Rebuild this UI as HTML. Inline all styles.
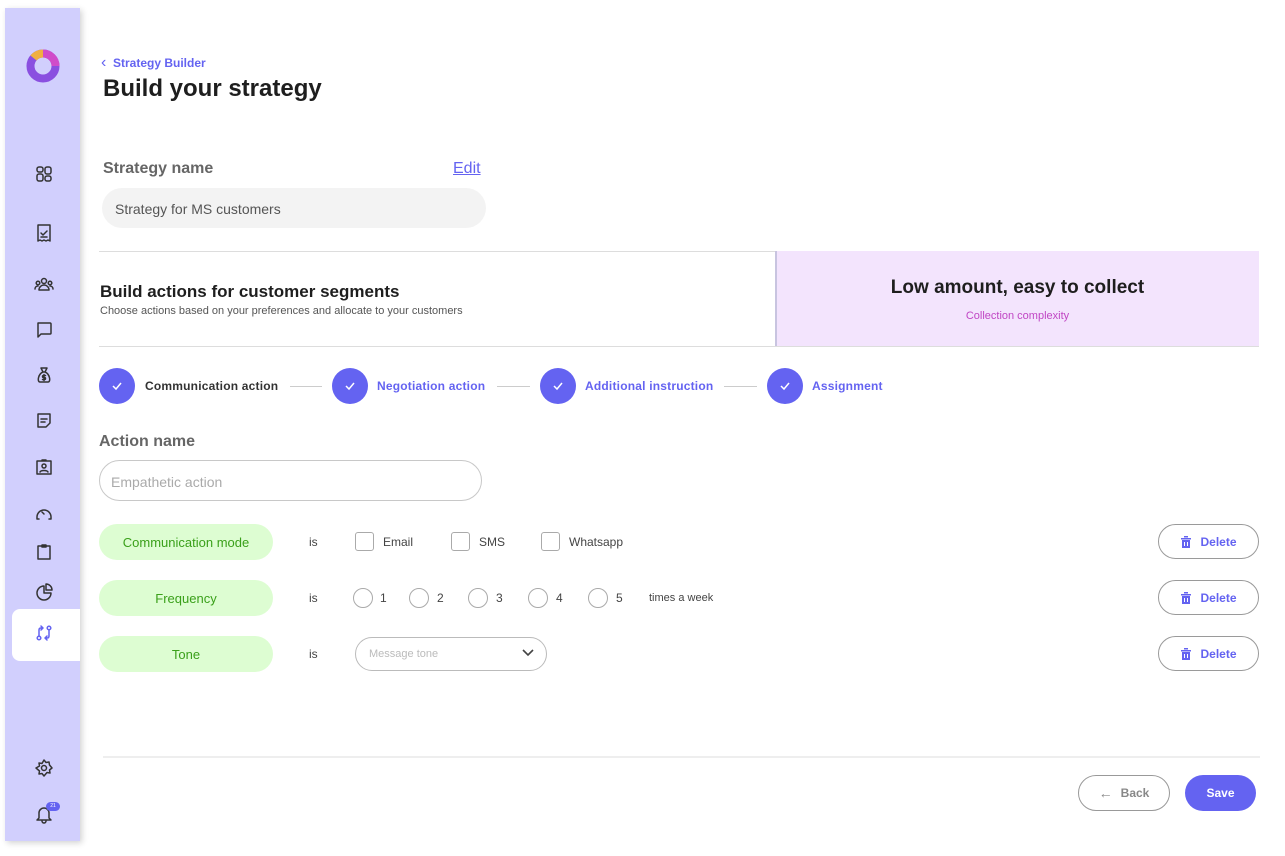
<!DOCTYPE html>
<html><head><meta charset="utf-8"><style>
*{box-sizing:border-box;margin:0;padding:0}
body{width:1285px;height:856px;background:#fff;font-family:"Liberation Sans",sans-serif;position:relative;overflow:hidden;color:#222}
.a{position:absolute}
.side{left:5px;top:8px;width:75px;height:833px;background:#d1cffd;box-shadow:2px 2px 6px rgba(0,0,0,.18)}
.ic{position:absolute;left:34px;width:20px;height:20px}
.ic svg{width:20px;height:20px;fill:none;stroke:#333;stroke-width:1.5;stroke-linecap:round;stroke-linejoin:round}
.chk{position:absolute;top:368px;width:36px;height:36px;border-radius:50%;background:#6463f1;display:flex;align-items:center;justify-content:center}
.st{position:absolute;top:379px;font-size:12px;font-weight:bold;color:#6463f1;letter-spacing:.2px}
.ln{position:absolute;top:386px;height:1px;background:#ccc}
.pill{width:174px;height:36px;border-radius:18px;background:#ddfdd2;color:#3aa01a;font-size:13px;display:flex;align-items:center;justify-content:center}
.del{width:101px;height:35px;border:1px solid #9a9a9a;border-radius:18px;color:#6463f1;font-weight:bold;font-size:12px;display:flex;align-items:center;justify-content:center;gap:8px}
.cb{width:19px;height:19px;border:1px solid #aaa;border-radius:3px}
.rd{width:20px;height:20px;border:1px solid #aaa;border-radius:50%}
.t13{font-size:12px;color:#444}
</style></head><body>
<div class="a side"></div>
<div class="a" style="left:12px;top:609px;width:68px;height:52px;background:#fff;border-radius:8px 0 0 8px"></div>
<svg class="a" style="left:26px;top:49px" width="34" height="34" viewBox="0 0 34 34"><circle cx="17" cy="17" r="12.5" fill="none" stroke="#8a4fe0" stroke-width="8"/><path d="M17 4.5 A12.5 12.5 0 0 1 29.5 17" fill="none" stroke="#d04cc9" stroke-width="8"/><path d="M7.5 9 A12.5 12.5 0 0 1 17 4.5" fill="none" stroke="#f0b040" stroke-width="8"/></svg>
<div class="ic" style="top:164px"><svg viewBox="0 0 20 20"><rect x="3" y="3" width="6" height="5" rx="2"/><rect x="3" y="10" width="6" height="7" rx="2"/><rect x="11" y="3" width="6" height="7" rx="2"/><rect x="11" y="12" width="6" height="5" rx="2"/></svg></div>
<div class="ic" style="top:223px"><svg viewBox="0 0 20 20"><path d="M4 2h12v16l-2-1-2 1-2-1-2 1-2-1-2 1z"/><path d="M7 10l2 2 4-4M7 14h6"/></svg></div>
<div class="ic" style="top:274px"><svg viewBox="0 0 20 20"><circle cx="10" cy="7" r="2.5"/><circle cx="4" cy="9" r="1.8"/><circle cx="16" cy="9" r="1.8"/><path d="M5 16c0-3 2.5-5 5-5s5 2 5 5zM1 15c0-2 1.5-3 3-3M19 15c0-2-1.5-3-3-3"/></svg></div>
<div class="ic" style="top:319px"><svg viewBox="0 0 20 20"><path d="M4 4h12a1 1 0 011 1v9a1 1 0 01-1 1H7l-3 3z"/></svg></div>
<div class="ic" style="top:365px"><svg viewBox="0 0 20 20"><path d="M7 3h6l-2 4h-2zM9 7C4 9 3 17 6 17h8c3 0 2-8-3-10"/><path d="M11.5 10.5h-2a1 1 0 000 2h1a1 1 0 010 2h-2M10 9.5v6"/></svg></div>
<div class="ic" style="top:410px"><svg viewBox="0 0 20 20"><path d="M4 4h12v9l-4 4H4z"/><path d="M7 9h6M7 12h4"/></svg></div>
<div class="ic" style="top:457px"><svg viewBox="0 0 20 20"><rect x="3" y="4" width="14" height="13"/><circle cx="10" cy="9" r="2"/><path d="M6 15c1-2 7-2 8 0M8 3h4"/></svg></div>
<div class="ic" style="top:503px"><svg viewBox="0 0 20 20"><path d="M3 14a7 7 0 0114 0M3 14v2h2M17 14v2h-2M8 9l2 2"/></svg></div>
<div class="ic" style="top:542px"><svg viewBox="0 0 20 20"><rect x="4" y="4" width="12" height="13"/><path d="M8 3h4v2H8z"/></svg></div>
<div class="ic" style="top:582px"><svg viewBox="0 0 20 20"><path d="M10 4a7 7 0 107 7h-7z"/><path d="M12 2a6 6 0 016 6h-6z"/></svg></div>
<div class="ic" style="top:623px"><svg viewBox="0 0 20 20" style="stroke:#6463f1"><circle cx="5" cy="15" r="1.8"/><circle cx="15" cy="5" r="1.8"/><path d="M5 13V7q0-2 2-2h2M7 3l2 2-2 2M15 7v6q0 2-2 2h-2M13 17l-2-2 2-2"/></svg></div>
<div class="ic" style="top:758px"><svg viewBox="0 0 20 20"><circle cx="10" cy="10" r="2.5"/><path d="M10 2l2 2.5 3-.5.5 3L18 10l-2.5 2 .5 3-3-.5L10 18l-2-2.5-3 .5.5-3L2 10l3.5-2-.5-3 3 .5z"/></svg></div>
<div class="ic" style="top:804px"><svg viewBox="0 0 20 20"><path d="M5 14V9a5 5 0 0110 0v5l2 2H3zM8 17a2 2 0 004 0"/></svg></div>
<div class="a" style="left:46px;top:802px;width:14px;height:9px;border-radius:5px;background:#6463f1;color:#fff;font-size:5px;text-align:center;line-height:9px">21</div>

<div class="a" style="left:101px;top:56px;color:#6463f1;font-size:12px;font-weight:bold"><span style="font-size:16px;line-height:12px;font-weight:normal">&#8249;</span>&nbsp;&nbsp;Strategy Builder</div>
<div class="a" style="left:103px;top:75px;font-size:24px;font-weight:bold;color:#1e1e1e">Build your strategy</div>
<div class="a" style="left:103px;top:160px;font-size:16px;font-weight:bold;color:#666">Strategy name</div>
<div class="a" style="left:453px;top:160px;font-size:16px;color:#6463f1;text-decoration:underline">Edit</div>
<div class="a" style="left:102px;top:188px;width:384px;height:40px;border-radius:20px;background:#f3f3f3;font-size:14px;color:#555;padding:13px 0 0 13px">Strategy for MS customers</div>

<div class="a" style="left:99px;top:251px;width:1160px;height:96px;border-top:1px solid #ddd;border-bottom:1px solid #ddd"></div>
<div class="a" style="left:775px;top:251px;width:484px;height:95px;background:#f3e4fd;border-left:2px solid #c8c4e0"></div>
<div class="a" style="left:100px;top:282px;font-size:17px;font-weight:bold;color:#1e1e1e">Build actions for customer segments</div>
<div class="a" style="left:100px;top:305px;font-size:11px;color:#555">Choose actions based on your preferences and allocate to your customers</div>
<div class="a" style="left:776px;top:277px;width:483px;text-align:center;font-size:19px;font-weight:bold;color:#1e1e1e">Low amount, easy to collect</div>
<div class="a" style="left:776px;top:310px;width:483px;text-align:center;font-size:11px;color:#c046c4">Collection complexity</div>

<div class="chk" style="left:99px"><svg width="12" height="12" viewBox="0 0 12 12"><path d="M2 6l3 3 5-6" fill="none" stroke="#fff" stroke-width="1.5"/></svg></div>
<div class="st" style="left:145px;color:#333">Communication action</div>
<div class="ln" style="left:290px;width:32px"></div>
<div class="chk" style="left:332px"><svg width="12" height="12" viewBox="0 0 12 12"><path d="M2 6l3 3 5-6" fill="none" stroke="#fff" stroke-width="1.5"/></svg></div>
<div class="st" style="left:377px">Negotiation action</div>
<div class="ln" style="left:497px;width:33px"></div>
<div class="chk" style="left:540px"><svg width="12" height="12" viewBox="0 0 12 12"><path d="M2 6l3 3 5-6" fill="none" stroke="#fff" stroke-width="1.5"/></svg></div>
<div class="st" style="left:585px">Additional instruction</div>
<div class="ln" style="left:724px;width:33px"></div>
<div class="chk" style="left:767px"><svg width="12" height="12" viewBox="0 0 12 12"><path d="M2 6l3 3 5-6" fill="none" stroke="#fff" stroke-width="1.5"/></svg></div>
<div class="st" style="left:812px">Assignment</div>

<div class="a" style="left:99px;top:433px;font-size:16px;font-weight:bold;color:#666">Action name</div>
<div class="a" style="left:99px;top:460px;width:383px;height:41px;border:1px solid #c8c8c8;border-radius:21px;font-size:14px;color:#aaa;padding:13px 0 0 11px">Empathetic action</div>

<div class="a pill" style="left:99px;top:524px">Communication mode</div>
<div class="a pill" style="left:99px;top:580px">Frequency</div>
<div class="a pill" style="left:99px;top:636px">Tone</div>
<div class="a t13" style="left:309px;top:535px">is</div>
<div class="a t13" style="left:309px;top:591px">is</div>
<div class="a t13" style="left:309px;top:647px">is</div>

<div class="a cb" style="left:355px;top:532px"></div><div class="a t13" style="left:383px;top:535px">Email</div>
<div class="a cb" style="left:451px;top:532px"></div><div class="a t13" style="left:479px;top:535px">SMS</div>
<div class="a cb" style="left:541px;top:532px"></div><div class="a t13" style="left:569px;top:535px">Whatsapp</div>

<div class="a rd" style="left:353px;top:588px"></div><div class="a t13" style="left:380px;top:591px">1</div>
<div class="a rd" style="left:409px;top:588px"></div><div class="a t13" style="left:437px;top:591px">2</div>
<div class="a rd" style="left:468px;top:588px"></div><div class="a t13" style="left:496px;top:591px">3</div>
<div class="a rd" style="left:528px;top:588px"></div><div class="a t13" style="left:556px;top:591px">4</div>
<div class="a rd" style="left:588px;top:588px"></div><div class="a t13" style="left:616px;top:591px">5</div>
<div class="a t13" style="left:649px;top:592px;font-size:11px">times a week</div>

<div class="a" style="left:355px;top:637px;width:192px;height:34px;border:1px solid #bbb;border-radius:17px;font-size:11px;color:#bbb;padding:10px 0 0 13px">Message tone</div>
<svg class="a" style="left:521px;top:648px" width="14" height="10" viewBox="0 0 14 10"><path d="M2 2l5 5 5-5" fill="none" stroke="#444" stroke-width="1.6"/></svg>

<div class="a del" style="left:1158px;top:524px"><svg width="12" height="14" viewBox="0 0 12 14"><path d="M4 1h4v1.5H4zM1 3h10v1.5H1zM2 5h8v8H2z" fill="#6463f1"/><path d="M4.5 7v4M7.5 7v4" stroke="#fff" stroke-width="1"/></svg>Delete</div>
<div class="a del" style="left:1158px;top:580px"><svg width="12" height="14" viewBox="0 0 12 14"><path d="M4 1h4v1.5H4zM1 3h10v1.5H1zM2 5h8v8H2z" fill="#6463f1"/><path d="M4.5 7v4M7.5 7v4" stroke="#fff" stroke-width="1"/></svg>Delete</div>
<div class="a del" style="left:1158px;top:636px"><svg width="12" height="14" viewBox="0 0 12 14"><path d="M4 1h4v1.5H4zM1 3h10v1.5H1zM2 5h8v8H2z" fill="#6463f1"/><path d="M4.5 7v4M7.5 7v4" stroke="#fff" stroke-width="1"/></svg>Delete</div>

<div class="a" style="left:103px;top:756px;width:1157px;height:2px;background:#eee"></div>
<div class="a" style="left:1078px;top:775px;width:92px;height:36px;border:1px solid #999;border-radius:18px;color:#888;font-weight:bold;font-size:12px;display:flex;align-items:center;justify-content:center;gap:8px"><span style="font-size:14px">&#8592;</span>Back</div>
<div class="a" style="left:1185px;top:775px;width:71px;height:36px;border-radius:18px;background:#6463f1;color:#fff;font-weight:bold;font-size:12px;display:flex;align-items:center;justify-content:center">Save</div>
</body></html>
